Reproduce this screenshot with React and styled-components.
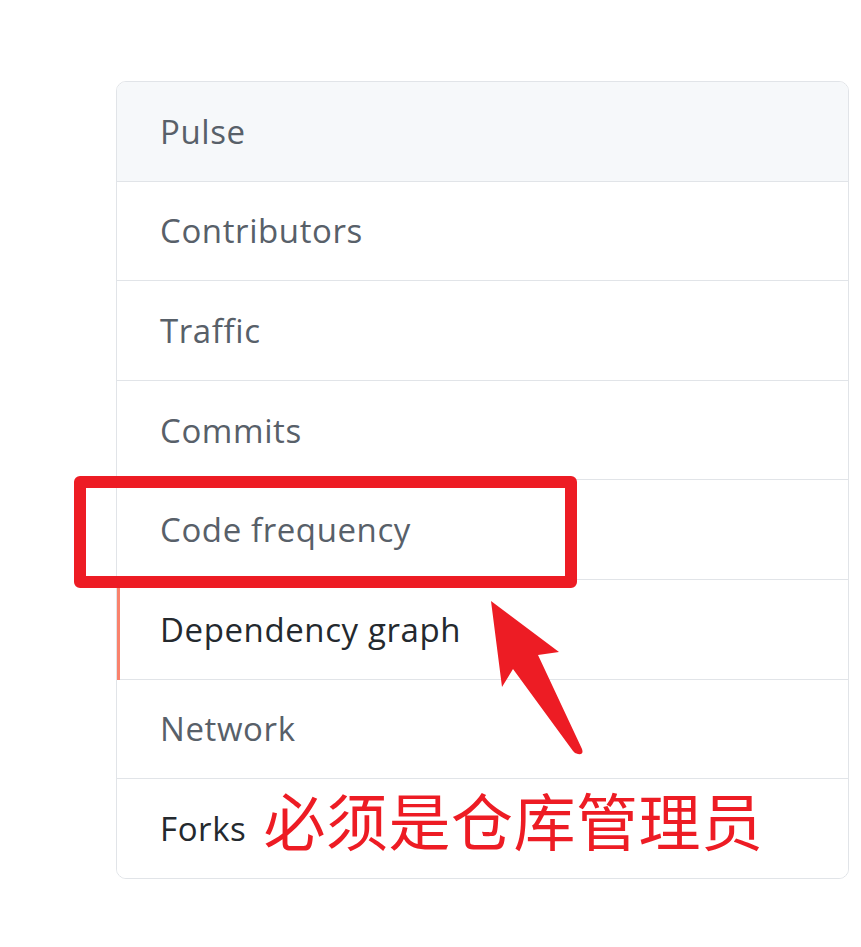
import React from "react";
import styled, { createGlobalStyle } from "styled-components";

const GlobalStyle = createGlobalStyle`
  html, body {
    margin: 0;
    padding: 0;
    background: #fff;
  }
  body {
    font-family: "Open Sans", "Noto Sans", "Liberation Sans", sans-serif;
  }
`;

const Page = styled.div`
  position: relative;
  width: 861px;
  height: 947px;
  padding: 81px 0 0 116px;
  box-sizing: border-box;
`;

const Menu = styled.nav`
  width: 733px;
  box-sizing: border-box;
  border: 1px solid #e1e4e8;
  border-radius: 10px;
  overflow: hidden;
  display: flex;
  flex-direction: column;
`;

const Item = styled.div`
  position: relative;
  height: 98.6px;
  display: flex;
  align-items: center;
  padding-left: 43px;
  font-size: 33px;
  letter-spacing: 0.6px;
  color: ${props => (props.dark ? "#24292e" : "#586069")};
  background: ${props => (props.shaded ? "#f6f8fa" : "#fff")};
  border-bottom: 1px solid #e1e4e8;
  &:last-child {
    border-bottom: none;
  }
  &::before {
    content: "";
    display: ${props => (props.active ? "block" : "none")};
    position: absolute;
    left: -1px;
    top: 0;
    bottom: -1px;
    width: 4px;
    background: #f9826c;
  }
`;

const Note = styled.span`
  margin-left: 17px;
  margin-top: -18px;
  font-family: "Noto Sans CJK SC", "Noto Sans", sans-serif;
  font-size: 62px;
  color: #ed1c24;
  letter-spacing: 0.5px;
`;

const Highlight = styled.div`
  position: absolute;
  left: 74px;
  top: 476px;
  width: 503px;
  height: 112px;
  box-sizing: border-box;
  border: 12px solid #ed1c24;
  border-radius: 6px;
  pointer-events: none;
`;

const Arrow = styled.svg`
  position: absolute;
  left: 0;
  top: 0;
  pointer-events: none;
`;

const items = [
  { label: "Pulse", shaded: true },
  { label: "Contributors" },
  { label: "Traffic" },
  { label: "Commits" },
  { label: "Code frequency" },
  { label: "Dependency graph", dark: true, active: true },
  { label: "Network" },
  { label: "Forks", dark: true, note: "必须是仓库管理员" }
];

export default function App() {
  return (
    <Page>
      <GlobalStyle />
      <Menu>
        {items.map(item => (
          <Item
            key={item.label}
            shaded={item.shaded}
            dark={item.dark}
            active={item.active}
          >
            {item.label}
            {item.note && <Note>{item.note}</Note>}
          </Item>
        ))}
      </Menu>
      <Highlight />
      <Arrow width="861" height="947" viewBox="0 0 861 947">
        <path
          d="M491 601 L559 652 L538 655 L582 749 Q584 755 578 754 Q575 754 573 751 L513 669 L502 687 Z"
          fill="#ed1c24"
        />
      </Arrow>
    </Page>
  );
}
